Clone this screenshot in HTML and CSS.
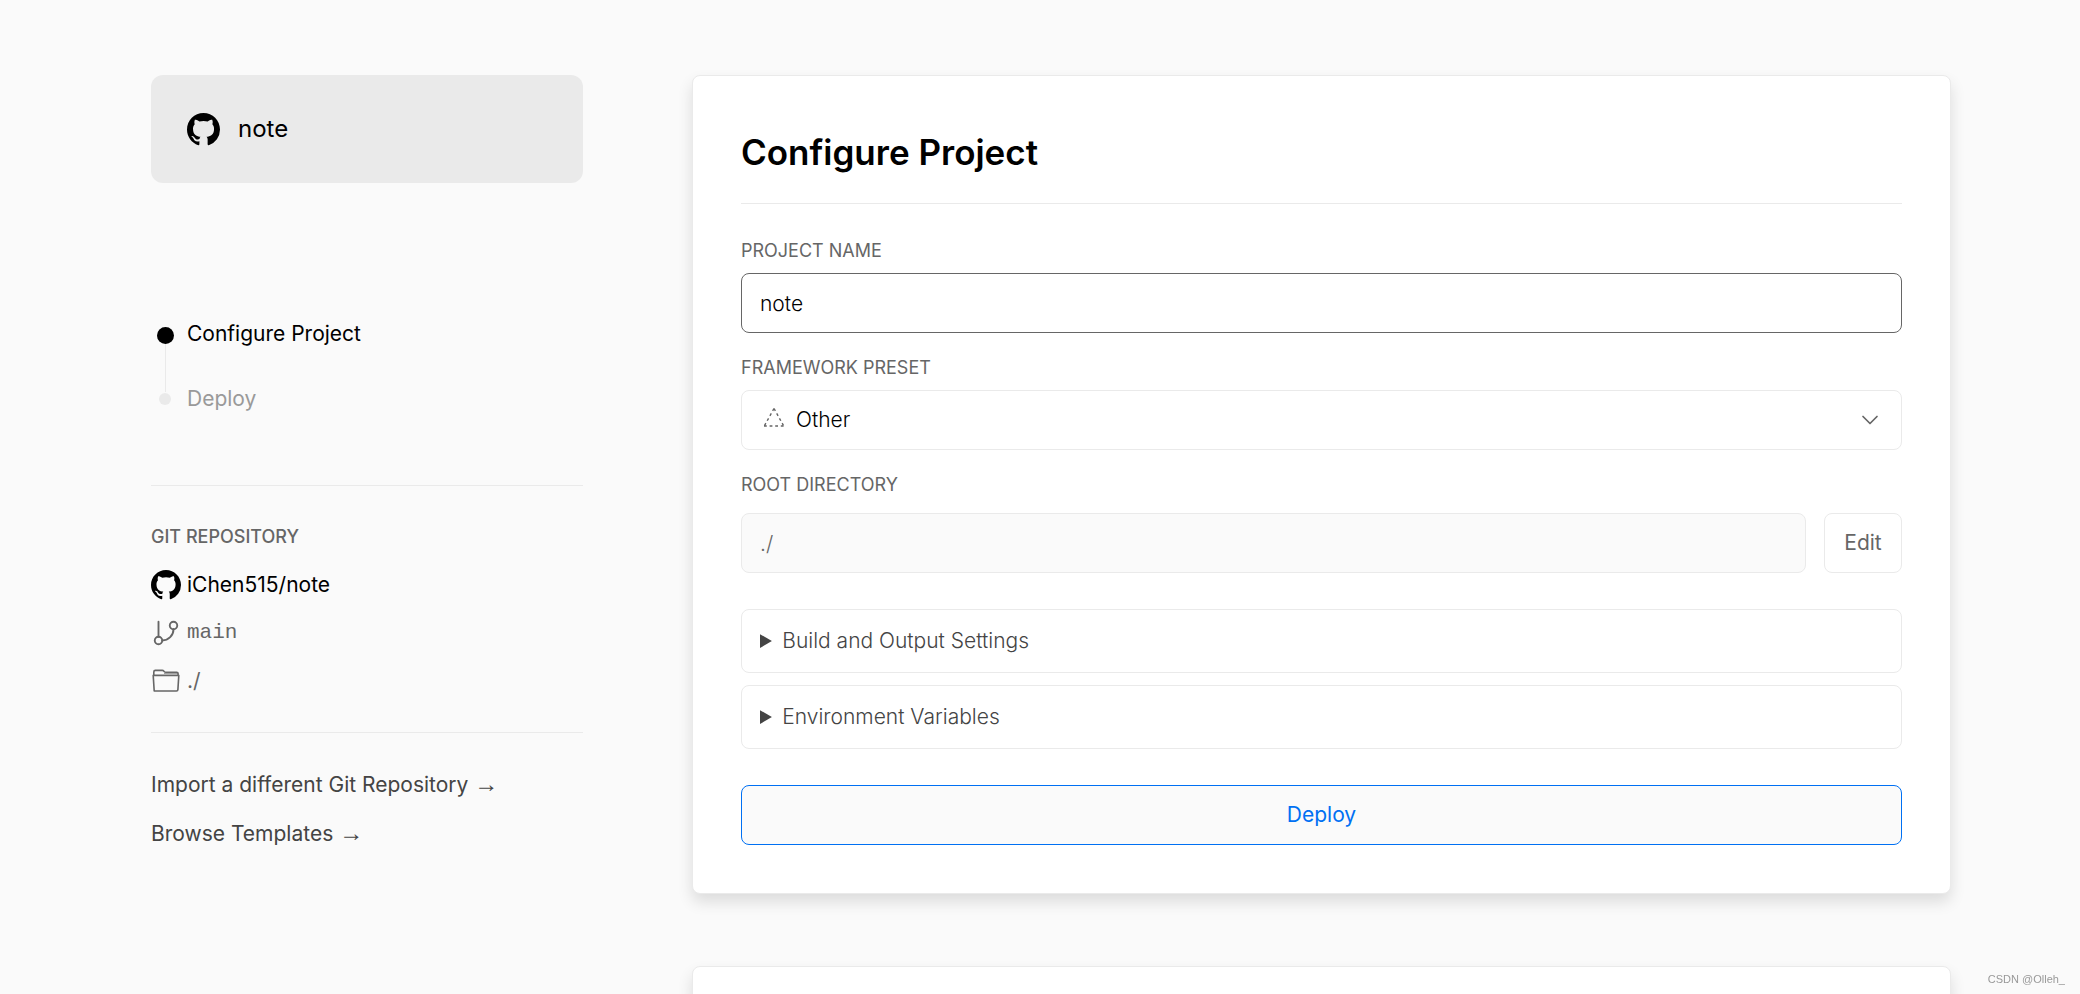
FILE: index.html
```html
<!DOCTYPE html>
<html lang="en">
<head>
<meta charset="utf-8">
<meta name="viewport" content="width=device-width, initial-scale=1">
<title>Configure Project</title>
<link rel="stylesheet" href="styles.css">
</head>
<body>
<svg class="defs" aria-hidden="true">
  <symbol id="github" viewBox="0 0 16 16">
    <path fill="currentColor" fill-rule="evenodd" d="M8 0C3.58 0 0 3.58 0 8c0 3.54 2.29 6.53 5.47 7.59.4.07.55-.17.55-.38 0-.19-.01-.82-.01-1.49-2.01.37-2.53-.49-2.69-.94-.09-.23-.48-.94-.82-1.13-.28-.15-.68-.52-.01-.53.63-.01 1.08.58 1.23.82.72 1.21 1.87.87 2.33.66.07-.52.28-.87.51-1.07-1.78-.2-3.64-.89-3.64-3.95 0-.87.31-1.59.82-2.15-.08-.2-.36-1.02.08-2.12 0 0 .67-.21 2.2.82.64-.18 1.32-.27 2-.27.68 0 1.36.09 2 .27 1.53-1.04 2.2-.82 2.2-.82.44 1.1.16 1.92.08 2.12.51.56.82 1.27.82 2.15 0 3.07-1.87 3.75-3.65 3.95.29.25.54.73.54 1.48 0 1.07-.01 1.93-.01 2.2 0 .21.15.46.55.38A8.013 8.013 0 0016 8c0-4.42-3.58-8-8-8z"/>
  </symbol>
</svg>
<div class="page">
  <aside class="sidebar">
    <div class="project">
      <svg class="project-icon" aria-hidden="true"><use href="#github"/></svg>
      <span>note</span>
    </div>
    <ol class="steps">
      <li class="step step-active"><span class="dot"></span>Configure Project</li>
      <li class="step"><span class="dot"></span>Deploy</li>
    </ol>
    <section class="repo">
      <h2 class="repo-title">Git Repository</h2>
      <ul class="repo-list">
        <li><a class="repo-link" href="#"><svg class="icon" aria-hidden="true"><use href="#github"/></svg>iChen515/note</a></li>
        <li class="repo-branch">
          <svg class="icon" viewBox="0 0 24 24" fill="none" stroke="currentColor" stroke-width="1.5" stroke-linecap="round" aria-hidden="true"><path d="M6 3v12M18 9a9 9 0 0 1-9 9"/><circle cx="18" cy="6" r="3"/><circle cx="6" cy="18" r="3"/></svg>main</li>
        <li>
          <svg class="icon" viewBox="0 0 30 30" fill="none" stroke="currentColor" stroke-width="1.6" stroke-linejoin="round" aria-hidden="true"><path d="M2.8 9.500V6q0-1.600 1.600-1.600h6.800q1 0 1.600.7l.6.6q.5.5 1.300.5h11q1.400 0 1.400 1.400v2M3.200 25 2.200 9.400h25.600l-.9 14.200q-.1 1.400-1.400 1.400z"/><path stroke-width="1" stroke-opacity=".6" d="M13 7.500h14"/></svg>./</li>
      </ul>
    </section>
    <nav class="links">
      <a href="#">Import a different Git Repository <span class="arrow">→</span></a>
      <a href="#">Browse Templates <span class="arrow">→</span></a>
    </nav>
  </aside>
  <main class="content">
    <form class="card">
      <h1 class="title">Configure Project</h1>
      <div class="field">
        <label class="label" for="name">Project Name</label>
        <input class="control control-focus" id="name" type="text" value="note">
      </div>
      <div class="field">
        <label class="label" for="preset">Framework Preset</label>
        <div class="select">
          <svg class="select-icon" viewBox="0 0 22 22" fill="none" stroke="currentColor" stroke-width="1.4" stroke-dasharray="2.8 2.8" aria-hidden="true"><path d="M11 1.500 1 19.500M11 1.500l10 18M1 19h21"/></svg>
          <select class="control control-select" id="preset"><option>Other</option></select>
          <svg class="chevron" viewBox="0 0 24 24" fill="none" stroke="currentColor" stroke-width="1.7" stroke-linecap="round" stroke-linejoin="round" aria-hidden="true"><path d="m5 8.500 7 7 7-7"/></svg>
        </div>
      </div>
      <div class="field field-root">
        <label class="label" for="root">Root Directory</label>
        <div class="root-row">
          <input class="control" id="root" type="text" value="./" disabled>
          <button class="edit" type="button">Edit</button>
        </div>
      </div>
      <div class="panels">
        <details class="panel"><summary>Build and Output Settings</summary></details>
        <details class="panel"><summary>Environment Variables</summary></details>
      </div>
      <button class="deploy" type="button">Deploy</button>
    </form>
    <section class="card card-next"></section>
  </main>
</div>
<div class="watermark">CSDN @Olleh_</div>
</body>
</html>
```
FILE: styles.css
```css
* { box-sizing: border-box; }
body {
  margin: 0;
  background: #fafafa;
  color: #000;
  font: 400 21px/32px Inter, "Liberation Sans", sans-serif;
}
h1, h2, ol, ul { margin: 0; padding: 0; }
ol, ul { list-style: none; }
a { color: inherit; text-decoration: none; }
input, select, button { font: inherit; }
.defs { position: absolute; width: 0; height: 0; }
.page {
  display: flex;
  gap: 109px;
  height: 100vh;
  overflow: hidden;
  padding: 75px 129px 0 151px;
}
.sidebar { flex: 0 0 432px; }
.project {
  display: flex;
  align-items: center;
  gap: 18px;
  height: 108px;
  padding: 0 36px;
  border-radius: 12px;
  background: #eaeaea;
  font-size: 24px;
}
.project-icon { width: 33px; height: 33px; }
.steps {
  display: flex;
  flex-direction: column;
  gap: 33px;
  padding: 135px 0 70px 6px;
}
.step {
  position: relative;
  display: flex;
  align-items: center;
  gap: 15px;
  color: #999;
}
.dot {
  width: 12px;
  height: 12px;
  margin: 0 1px 0 2px;
  border-radius: 50%;
  background: #eaeaea;
}
.step-active { color: #000; }
.step-active .dot { width: 17px; height: 17px; margin: 2px -2px 0 0; background: #000; }
.step-active::after {
  content: "";
  position: absolute;
  left: 8px;
  top: 26px;
  width: 1px;
  height: 48px;
  background: #eaeaea;
}
.repo {
  padding: 35px 0;
  border: solid #eaeaea;
  border-width: 1px 0;
}
.repo-title {
  color: #666;
  font-size: 18px;
  font-weight: 500;
  text-transform: uppercase;
}
.repo-list {
  display: flex;
  flex-direction: column;
  gap: 16px;
  padding-top: 16px;
  color: #666;
}
.repo-list li, .repo-link { display: flex; align-items: center; gap: 6px; }
.repo-link { color: #000; }
.repo-branch { font-family: "Liberation Mono", monospace; }
.icon { width: 30px; height: 30px; }
.links {
  display: flex;
  flex-direction: column;
  gap: 17px;
  padding-top: 36px;
  color: #444;
}
.arrow { font: 24px/24px "Liberation Sans", sans-serif; }
.content { flex: 1; min-width: 0; }
.card {
  padding: 48px;
  border: 1px solid #eaeaea;
  border-radius: 8px;
  background: #fff;
  box-shadow: 0 8px 15px rgba(0, 0, 0, .12);
}
.card-next { height: 400px; margin-top: 72px; }
.title {
  padding: 3px 0 26px;
  border-bottom: 1px solid #eaeaea;
  font-size: 35px;
  font-weight: 600;
  line-height: 50px;
}
.field { padding-top: 19px; }
.title + .field { padding-top: 31px; }
.label {
  display: block;
  margin-bottom: 6px;
  color: #666;
  font-size: 18px;
  text-transform: uppercase;
}
.control {
  display: block;
  width: 100%;
  height: 60px;
  padding: 0 18px;
  border: 1px solid #eaeaea;
  border-radius: 8px;
  background: #fff;
  color: #000;
  font-weight: 300;
}
.control:focus { outline: none; }
.control:disabled { background: #fafafa; color: #666; }
.control-focus { border-color: #666; }
.control-select { appearance: none; padding-left: 54px; }
.select { position: relative; color: #666; }
.select-icon { position: absolute; left: 22px; top: 17px; width: 22px; height: 22px; }
.chevron { position: absolute; right: 20px; top: 18px; width: 24px; height: 24px; }
.field-root .label { margin-bottom: 12px; }
.root-row { display: flex; gap: 18px; }
.root-row .control { flex: 1; min-width: 0; }
.edit, .deploy { height: 60px; border-radius: 8px; cursor: pointer; }
.edit {
  min-width: 78px;
  padding: 0 18px;
  border: 1px solid #eaeaea;
  background: #fff;
  color: #666;
}
.panels {
  display: flex;
  flex-direction: column;
  gap: 12px;
  padding: 36px 0;
}
.panel {
  padding: 15px 18px;
  border: 1px solid #eaeaea;
  border-radius: 8px;
  color: #444;
  font-weight: 300;
}
.deploy {
  width: 100%;
  border: 1px solid #0070f3;
  background: #fafafa;
  color: #0070f3;
}
.watermark {
  position: fixed;
  right: 15px;
  bottom: 6px;
  color: #999;
  font: 11px/18px "Liberation Sans", sans-serif;
}
```
